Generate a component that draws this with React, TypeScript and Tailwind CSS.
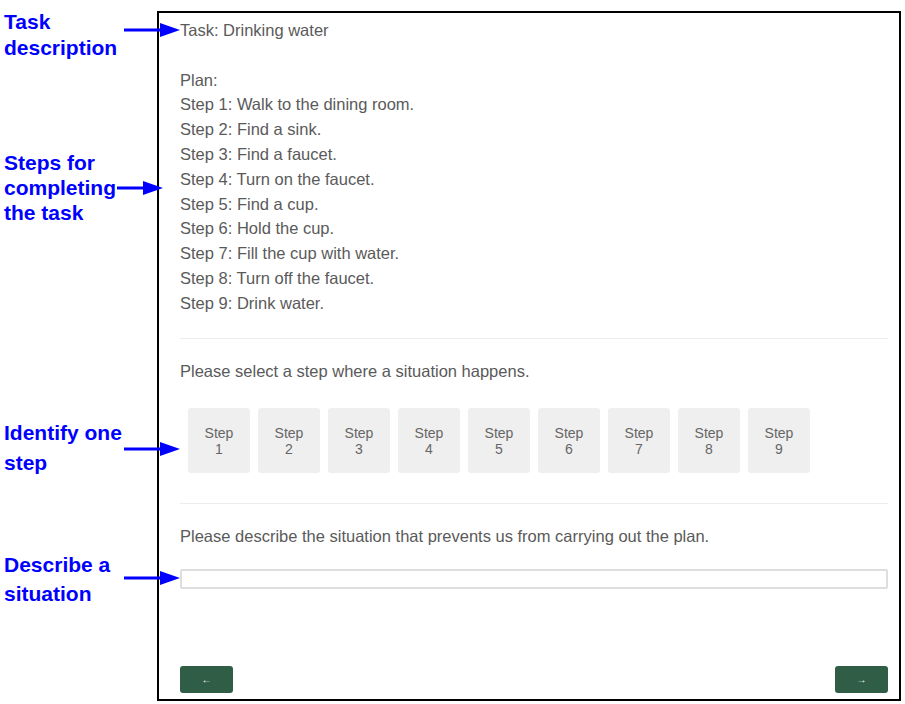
import { ReactNode } from 'react';

const steps = [
  'Walk to the dining room.',
  'Find a sink.',
  'Find a faucet.',
  'Turn on the faucet.',
  'Find a cup.',
  'Hold the cup.',
  'Fill the cup with water.',
  'Turn off the faucet.',
  'Drink water.',
];

// blue pointer arrow used by the callouts
function Arrow({ width }: { width: number }) {
  return (
    <svg width={width} height={16} viewBox={`0 0 ${width} 16`}>
      <line x1={0} y1={8} x2={width - 16} y2={8} stroke="#0000ff" strokeWidth={3} />
      <polygon points={`${width - 20},1 ${width},8 ${width - 20},15`} fill="#0000ff" />
    </svg>
  );
}

function Callout({ top, children }: { top: string; children: ReactNode }) {
  return (
    <div className={`absolute left-[4px] ${top} text-[21px] font-bold text-[#0000ff]`}>
      {children}
    </div>
  );
}

export default function App() {
  return (
    <div
      className="relative w-[905px] h-[704px] bg-white overflow-hidden"
      style={{ fontFamily: '"Liberation Sans", Arial, sans-serif' }}
    >
      {/* 标注 */}
      <Callout top="top-[9px] leading-[26px]">
        Task
        <br />
        description
      </Callout>
      <Callout top="top-[150px] leading-[25px]">
        Steps for
        <br />
        completing
        <br />
        the task
      </Callout>
      <Callout top="top-[418px] leading-[30px]">
        Identify one
        <br />
        step
      </Callout>
      <Callout top="top-[550px] leading-[29px]">
        Describe a
        <br />
        situation
      </Callout>

      <div className="absolute left-[124px] top-[22px]">
        <Arrow width={56} />
      </div>
      <div className="absolute left-[117px] top-[180px]">
        <Arrow width={46} />
      </div>
      <div className="absolute left-[124px] top-[441px]">
        <Arrow width={56} />
      </div>
      <div className="absolute left-[124px] top-[570px]">
        <Arrow width={56} />
      </div>

      {/* 主框 */}
      <div className="ml-[157px] mt-[11px] w-[744px] h-[690px] border-2 border-black flex flex-col pl-[21px] pr-[11px] pt-[5px] text-[16.5px] text-[#5a5a5a] leading-[24.8px]">
        <div>
          <div>Task: Drinking water</div>
          <div className="h-[24.8px]" />
          <div>Plan:</div>
          {steps.map((s, i) => (
            <div key={i}>
              Step {i + 1}: {s}
            </div>
          ))}
        </div>

        <div className="mt-[22px] border-t border-[#ececec]" />
        <div className="mt-[20px]">Please select a step where a situation happens.</div>

        <div className="mt-[25px] flex gap-[8px] pl-[8px]">
          {steps.map((_, i) => (
            <button
              key={i}
              className="w-[62px] h-[65px] bg-[#efefef] rounded-[3px] flex flex-col items-center justify-center text-[14px] leading-[16px] text-[#666]"
            >
              <span>Step</span>
              <span>{i + 1}</span>
            </button>
          ))}
        </div>

        <div className="mt-[30px] border-t border-[#ececec]" />
        <div className="mt-[20px]">Please describe the situation that prevents us from carrying out the plan.</div>

        <input className="mt-[20px] h-[20px] w-full border-2 border-[#dedede] rounded-[2px] outline-none" />

        <div className="mt-[77px] flex justify-between">
          <button className="w-[53px] h-[27px] bg-[#2f5d45] rounded-[3px] text-white text-[10px] leading-none">
            ←
          </button>
          <button className="w-[53px] h-[27px] bg-[#2f5d45] rounded-[3px] text-white text-[10px] leading-none">
            →
          </button>
        </div>
      </div>
    </div>
  );
}
